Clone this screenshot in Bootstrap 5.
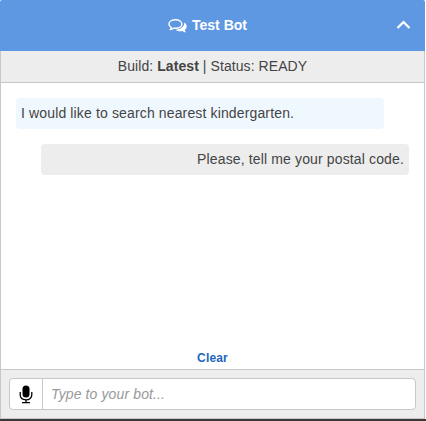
<!DOCTYPE html>
<html lang="en">
<head>
<meta charset="utf-8">
<meta name="viewport" content="width=device-width, initial-scale=1">
<title>Test Bot</title>
<link rel="stylesheet" href="https://cdn.jsdelivr.net/npm/bootstrap@5.3.0/dist/css/bootstrap.min.css">
<style>
  body { font: 14px/21px "Liberation Sans", Arial, sans-serif; color: #444; background: #fff; }
  .page-strip { height: 2px; background: #3a3838; }
  .chat-window { width: 425px; height: 419px; border-radius: 2px 2px 0 0; }
  .chat-header { height: 51px; background: #5e97e2; color: #fff; padding-right: 10px; border-radius: 2px 2px 0 0; }
  .chat-toggle { right: 14px; top: 20px; line-height: 0; color: #fff; }
  .chat-body { border: solid #c8c8c8; border-width: 0 1px 1px; }
  .chat-status { height: 32px; background: #ededed; border-bottom: 1px solid #c8c8c8; padding-top: 5px; letter-spacing: .07px; }
  .chat-log { padding: 15px; gap: 15px; }
  .bubble { width: 368px; height: 31px; padding: 5px; border-radius: 4px; letter-spacing: .14px; }
  .bubble-user { background: #f0f8ff; }
  .bubble-bot { background: #ededed; }
  .chat-clear { font-size: 12px; line-height: 18px; color: #2266bb; margin-bottom: 2px; letter-spacing: .15px; }
  .chat-footer { height: 49px; background: #ededed; border-top: 1px solid #c8c8c8; padding: 8px; }
  .chat-footer .input-group { height: 32px; }
  .mic-button { width: 34px; background: #fff; border: 1px solid #c8c8c8; border-radius: 4px; }
  .chat-footer .form-control { border-color: #c8c8c8; border-radius: 4px; font-size: 14px; line-height: 20px; padding: 5px 8px; letter-spacing: .12px; }
  .chat-footer .form-control::placeholder { color: #999; font-style: italic; }
</style>
<script src="https://cdn.jsdelivr.net/npm/bootstrap@5.3.0/dist/js/bootstrap.bundle.min.js"></script>
</head>
<body class="overflow-hidden">
<div class="chat-window d-flex flex-column bg-white">
  <header class="chat-header position-relative d-flex align-items-center justify-content-center fw-bold">
    <svg class="me-1" width="20" height="16" viewBox="0 0 20 16" aria-hidden="true">
      <path fill="#fff" d="M16.300 4.500c1.500 1 2.400 2.300 2.400 3.900 0 1.500-.8 2.700-2 3.500.2.900.7 1.700 1.600 2.400-1.600.1-2.800-.4-3.900-1.300-2.800.6-5.300.1-6.900-1.300 5.200-.2 9.100-3 8.800-7.200z"/>
      <path fill="#5e97e2" stroke="#fff" stroke-width="1.400" stroke-linejoin="round" d="M7.400 1.700C3.700 1.700.9 3.600.9 6.100c0 1.500.9 2.700 2.400 3.500-.1.800-.5 1.400-1.100 2 1.400-.1 2.500-.6 3.500-1.500.5.200 1.100.2 1.700.2 3.700 0 6.500-1.800 6.500-4.200S11.100 1.700 7.400 1.700z"/>
    </svg>
    <span>Test Bot</span>
    <a class="chat-toggle position-absolute" href="#" aria-label="Collapse">
      <svg width="15" height="10" viewBox="0 0 15 10"><path d="M1.500 8 7.500 2l6 6" fill="none" stroke="#fff" stroke-width="2.200"/></svg>
    </a>
  </header>
  <main class="chat-body flex-grow-1 d-flex flex-column">
    <div class="chat-status text-center">Build: <strong>Latest</strong> | Status: READY</div>
    <div class="chat-log flex-grow-1 d-flex flex-column">
      <div class="bubble bubble-user">I would like to search nearest kindergarten.</div>
      <div class="bubble bubble-bot text-end align-self-end">Please, tell me your postal code.</div>
    </div>
    <a class="chat-clear align-self-center fw-bold text-decoration-none" href="#">Clear</a>
    <div class="chat-footer">
      <div class="input-group flex-nowrap">
        <button class="mic-button btn p-0 d-flex align-items-center justify-content-center" type="button" aria-label="Speak">
          <svg width="14" height="19" viewBox="0 0 14 19"><rect x="3.500" y="0.500" width="7" height="12" rx="3.500"/><path d="M1.200 7v2.800c0 3 2.300 5 5.800 5s5.800-2 5.800-5V7M7 14.500v3M3 17.600h8" fill="none" stroke="#000" stroke-width="1.300"/></svg>
        </button>
        <input class="form-control" type="text" placeholder="Type to your bot..." aria-label="Message">
      </div>
    </div>
  </main>
</div>
<div class="page-strip"></div>
</body>
</html>
